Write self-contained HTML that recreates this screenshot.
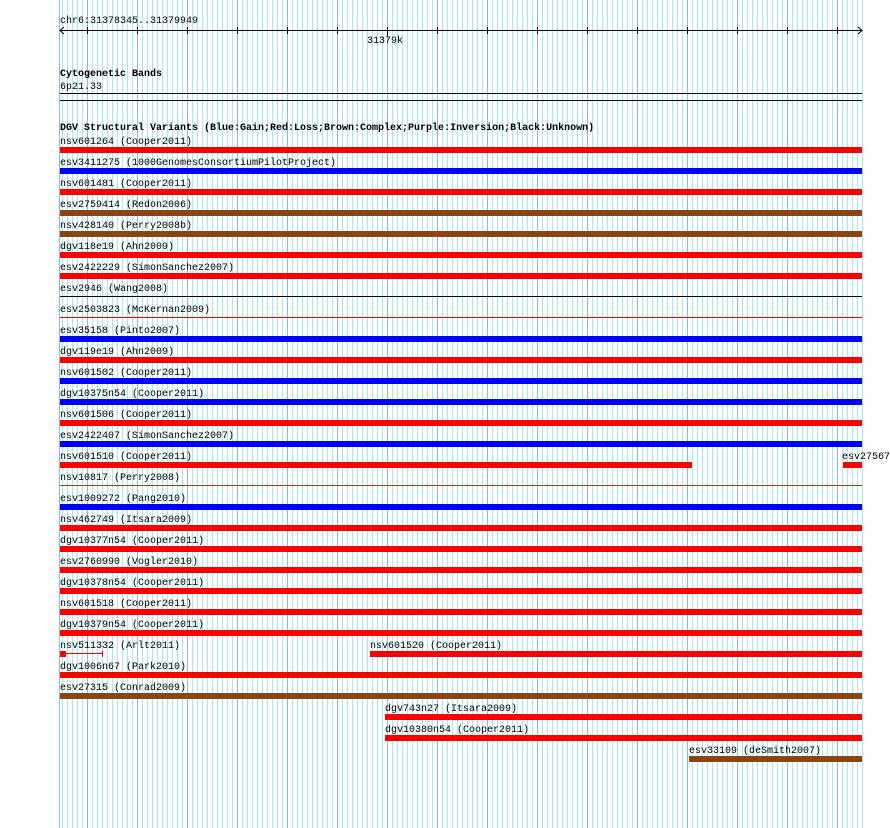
<!DOCTYPE html>
<html><head><meta charset="utf-8"><style>
html,body{margin:0;padding:0;background:#fff;}
svg{display:block;}
text{font-family:"Liberation Mono",monospace;font-size:10px;fill:#000;}
.b{font-weight:bold;}
</style></head><body>
<svg width="890" height="828" xmlns="http://www.w3.org/2000/svg">
<g id="grid"></g>
<text x="60" y="23">chr6:31378345..31379949</text>
<line x1="60" y1="30.5" x2="862" y2="30.5" stroke="#000"/>
<path d="M64 27 L60 30.5 L64 34 M858 27 L862 30.5 L858 34" stroke="#000" fill="none"/>
<g stroke="#000" id="ticks"></g>
<text x="367" y="43">31379k</text>
<text x="60" y="76" class="b">Cytogenetic Bands</text>
<text x="60" y="89">6p21.33</text>
<line x1="60" y1="93.5" x2="862" y2="93.5" stroke="#000"/>
<line x1="60" y1="100.5" x2="862" y2="100.5" stroke="#000"/>
<text x="60" y="130" class="b">DGV Structural Variants (Blue:Gain;Red:Loss;Brown:Complex;Purple:Inversion;Black:Unknown)</text>
<g id="rows"></g>
</svg>
<script>
var ns="http://www.w3.org/2000/svg";
function el(p,t,a,txt){var e=document.createElementNS(ns,t);for(var k in a)e.setAttribute(k,a[k]);if(txt)e.textContent=txt;p.appendChild(e);return e;}
var g=document.getElementById('grid');
for(var x=62;x<=862;x+=5){var d=((x-87)%50===0);el(g,'rect',{x:x,y:0,width:1,height:828,fill:d?'#86bce6':'#a2ecec'});}
el(g,'rect',{x:59,y:0,width:1,height:828,fill:'#86bce6'});
var t=document.getElementById('ticks');
for(var x=87;x<=862;x+=50){el(t,'line',{x1:x+0.5,y1:27,x2:x+0.5,y2:(x==387?36:34)});}
var R='#ff0000',B='#0000ff',N='#8b4513',K='#000';
var rows=[
["nsv601264 (Cooper2011)",R],["esv3411275 (1000GenomesConsortiumPilotProject)",B],["nsv601481 (Cooper2011)",R],
["esv2759414 (Redon2006)",N],["nsv428140 (Perry2008b)",N],["dgv118e19 (Ahn2009)",R],["esv2422229 (SimonSanchez2007)",R],
["esv2946 (Wang2008)",K,1],["esv2503823 (McKernan2009)",R,1],["esv35158 (Pinto2007)",B],["dgv119e19 (Ahn2009)",R],
["nsv601502 (Cooper2011)",B],["dgv10375n54 (Cooper2011)",B],["nsv601506 (Cooper2011)",R],["esv2422407 (SimonSanchez2007)",B],
["nsv601510 (Cooper2011)",R,0,60,692],["nsv10817 (Perry2008)",N,1],["esv1009272 (Pang2010)",B],["nsv462749 (Itsara2009)",R],
["dgv10377n54 (Cooper2011)",R],["esv2760990 (Vogler2010)",R],["dgv10378n54 (Cooper2011)",R],["nsv601518 (Cooper2011)",R],
["dgv10379n54 (Cooper2011)",R],["nsv511332 (Arlt2011)",R,2],["dgv1006n67 (Park2010)",R],["esv27315 (Conrad2009)",N],
["dgv743n27 (Itsara2009)",R,0,385,862],["dgv10380n54 (Cooper2011)",R,0,385,862],["esv33109 (deSmith2007)",N,0,689,862]];
var rg=document.getElementById('rows');
rows.forEach(function(r,i){
  var top=147+21*i,x1=r[3]||60,x2=r[4]||862;
  el(rg,'text',{x:x1,y:top-3},r[0]);
  if(r[2]==1){el(rg,'rect',{x:60,y:top+2,width:802,height:1,fill:r[1]});}
  else if(r[2]==2){el(rg,'rect',{x:60,y:top,width:6,height:6,fill:R});el(rg,'rect',{x:66,y:top+2,width:37,height:1,fill:R});el(rg,'rect',{x:102,y:top,width:1,height:6,fill:R});}
  else el(rg,'rect',{x:x1,y:top,width:x2-x1,height:6,fill:r[1]});
});
var t15=147+21*15;
el(rg,'text',{x:842,y:t15-3},"esv27567");
el(rg,'rect',{x:843,y:t15,width:19,height:6,fill:R});
var t24=147+21*24;
el(rg,'text',{x:370,y:t24-3},"nsv601520 (Cooper2011)");
el(rg,'rect',{x:370,y:t24,width:492,height:6,fill:R});
</script>
</body></html>
